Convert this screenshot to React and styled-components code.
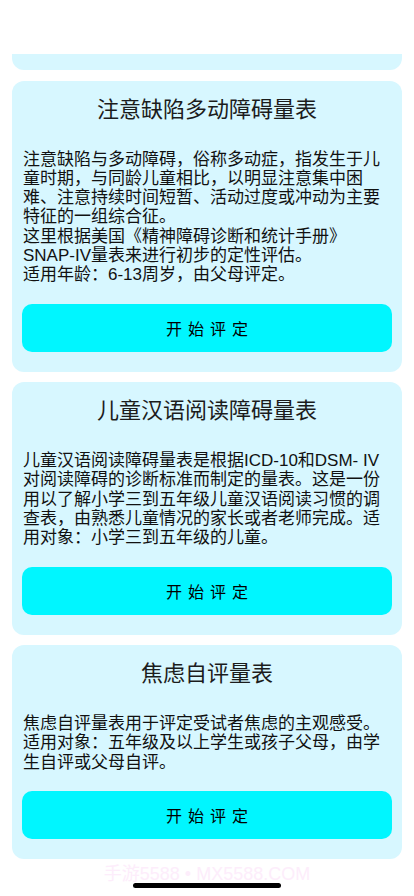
import React from "react";
import styled, { createGlobalStyle } from "styled-components";

const GlobalStyle = createGlobalStyle`
  html, body {
    margin: 0;
    padding: 0;
    background: #ffffff;
  }
  body {
    font-family: "Liberation Sans", "Noto Sans CJK SC", sans-serif;
    -webkit-font-smoothing: antialiased;
  }
`;

const Screen = styled.div`
  width: 414px;
  height: 896px;
  position: relative;
  overflow: hidden;
  display: flex;
  flex-direction: column;
  background: #ffffff;
`;

// white strip under the status bar
const Header = styled.div`
  height: 54px;
  flex-shrink: 0;
  background: #ffffff;
`;

const List = styled.div`
  flex: 1;
  display: flex;
  flex-direction: column;
  gap: 10.5px;
  padding: 0 12px;
`;

const Card = styled.div`
  background: #d7f7ff;
  border-radius: 12px;
  padding: 14px 10px 20px;
`;

// foot of the card that is scrolled out of view above
const CardTail = styled.div`
  height: 16px;
  background: #d7f7ff;
  border-radius: 0 0 12px 12px;
`;

const Title = styled.h2`
  margin: 0;
  font-size: 22px;
  line-height: 30px;
  font-weight: 400;
  text-align: center;
  color: #1c1c1c;
`;

const Body = styled.div`
  margin: 25px 0 19px;
  padding-left: 1px;
  font-size: 17px;
  line-height: 19.3px;
  color: #111111;
  white-space: pre-line;
`;

const StartButton = styled.button`
  display: block;
  width: 100%;
  height: 48px;
  border: none;
  border-radius: 10px;
  background: #00f6ff;
  color: #000000;
  font-family: "Noto Sans CJK SC", sans-serif;
  font-size: 16px;
  letter-spacing: 6px;
  padding: 0 0 0 6px;
  cursor: pointer;
`;

const Watermark = styled.div`
  position: absolute;
  left: 0;
  right: 0;
  bottom: 11px;
  text-align: center;
  font-size: 18px;
  line-height: 22px;
  color: #fdedfb;
  pointer-events: none;
`;

const HomeBar = styled.div`
  position: absolute;
  left: 50%;
  bottom: 8px;
  width: 148px;
  height: 5px;
  margin-left: -74px;
  border-radius: 3px;
  background: #000000;
`;

const scales = [
  {
    title: "注意缺陷多动障碍量表",
    text:
      "注意缺陷与多动障碍，俗称多动症，指发生于儿童时期，与同龄儿童相比，以明显注意集中困难、注意持续时间短暂、活动过度或冲动为主要特征的一组综合征。\n这里根据美国《精神障碍诊断和统计手册》SNAP-IV量表来进行初步的定性评估。\n适用年龄：6-13周岁，由父母评定。",
  },
  {
    title: "儿童汉语阅读障碍量表",
    text:
      "儿童汉语阅读障碍量表是根据ICD-10和DSM- IV对阅读障碍的诊断标准而制定的量表。这是一份用以了解小学三到五年级儿童汉语阅读习惯的调查表，由熟悉儿童情况的家长或者老师完成。适用对象：小学三到五年级的儿童。",
  },
  {
    title: "焦虑自评量表",
    text:
      "焦虑自评量表用于评定受试者焦虑的主观感受。\n适用对象：五年级及以上学生或孩子父母，由学生自评或父母自评。",
  },
];

const App = () => {
  return (
    <Screen>
      <GlobalStyle />
      <Header />
      <List>
        <CardTail />
        {scales.map((item) => (
          <Card key={item.title}>
            <Title>{item.title}</Title>
            <Body>{item.text}</Body>
            <StartButton>开始评定</StartButton>
          </Card>
        ))}
      </List>
      <Watermark>手游5588 • MX5588.COM</Watermark>
      <HomeBar />
    </Screen>
  );
};

export default App;
